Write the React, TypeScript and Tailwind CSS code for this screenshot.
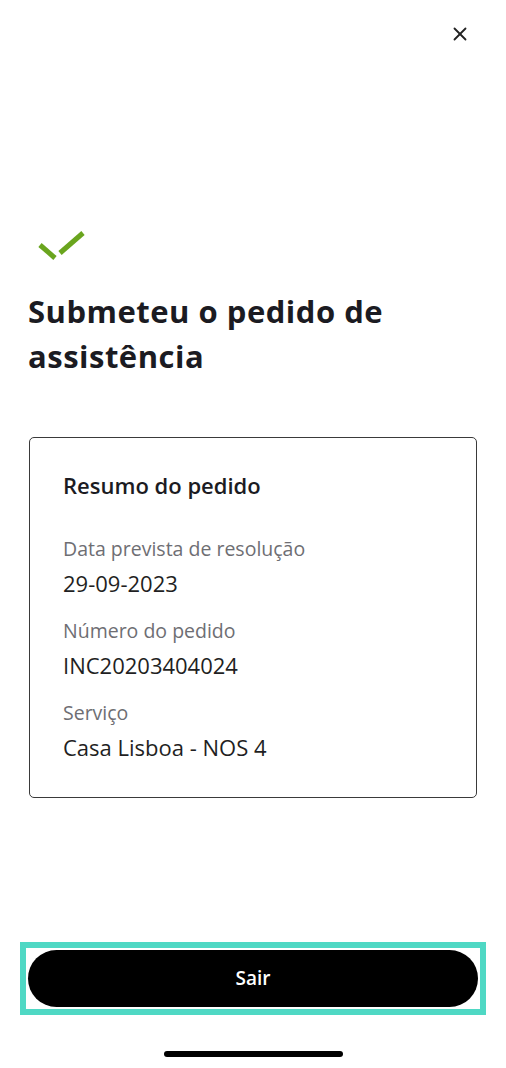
import { X } from "lucide-react";

const details = [
  { label: "Data prevista de resolução", value: "29-09-2023" },
  { label: "Número do pedido", value: "INC20203404024" },
  { label: "Serviço", value: "Casa Lisboa - NOS 4" },
];

function CheckMark() {
  return (
    <svg width="50" height="34" viewBox="0 0 50 34" aria-hidden>
      <line x1="2" y1="14" x2="17" y2="27" stroke="#6aa51e" strokeWidth="5" />
      <line x1="22" y1="22" x2="45" y2="2" stroke="#6aa51e" strokeWidth="5" />
    </svg>
  );
}

export default function App() {
  return (
    <div className="flex h-[1068px] w-[506px] flex-col bg-white font-['Open_Sans',sans-serif] text-[#1b1b22]">
      <div className="flex justify-end pr-[35px] pt-[23px]">
        <X className="size-[22px] text-[#222]" strokeWidth={2} aria-hidden />
      </div>

      <div className="mt-[186px] pl-[38px]">
        <CheckMark />
      </div>

      <h1 className="mt-[24px] px-[28px] text-[31px] font-bold leading-[45px] tracking-[0.5px]">
        Submeteu o pedido de
        <br />
        assistência
      </h1>

      <section className="mx-[29px] mt-[58px] rounded-[5px] border border-[#3a3a3a] px-[33px] pb-[36px] pt-[33px]">
        <h2 className="text-[22px] font-semibold leading-[28px]">Resumo do pedido</h2>
        <dl className="mt-[37px] flex flex-col gap-[21px]">
          {details.map((d) => (
            <div key={d.label} className="flex flex-col gap-[7px]">
              <dt className="text-[19.5px] leading-[26px] text-[#6e6e73]">{d.label}</dt>
              <dd className="text-[22px] leading-[28px] text-[#1f1f23]">{d.value}</dd>
            </div>
          ))}
        </dl>
      </section>

      <div className="flex-1" />

      <div className="mx-[20px] mb-[36px] border-[6px] border-[#4fd8c4] p-[2px]">
        <button className="flex h-[57px] w-full items-center justify-center rounded-full bg-black text-[19px] font-semibold text-white">
          Sair
        </button>
      </div>

      <div className="mb-[11px] flex justify-center">
        <div className="h-[6px] w-[179px] rounded-full bg-black" />
      </div>
    </div>
  );
}
